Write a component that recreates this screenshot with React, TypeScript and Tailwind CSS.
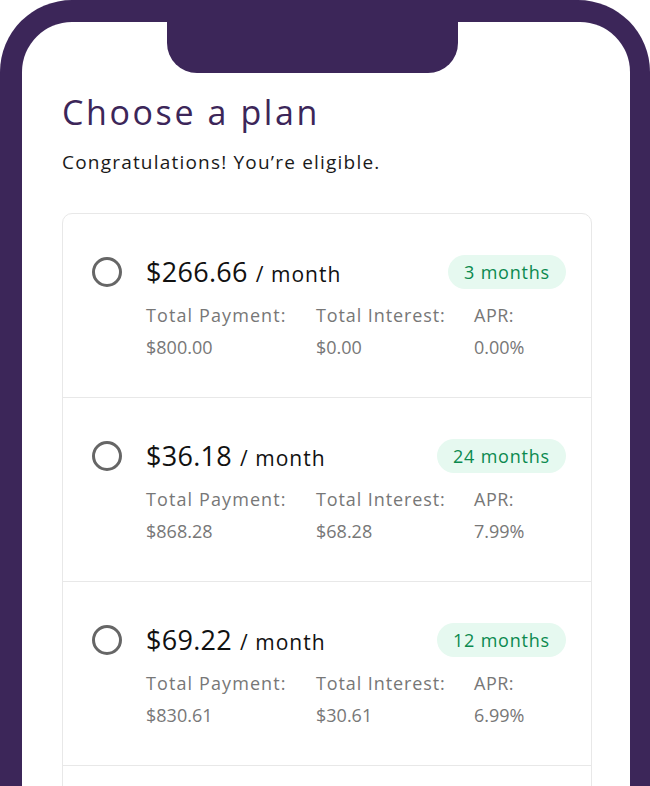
import React from "react";

const plans = [
  { monthly: "$266.66", term: "3 months", total: "$800.00", interest: "$0.00", apr: "0.00%" },
  { monthly: "$36.18", term: "24 months", total: "$868.28", interest: "$68.28", apr: "7.99%" },
  { monthly: "$69.22", term: "12 months", total: "$830.61", interest: "$30.61", apr: "6.99%" },
];

const PlanRow = ({ plan }: { plan: (typeof plans)[number] }) => (
  <div className="flex h-[184px] border-b border-[#e8e8e8] pl-[29px] pr-[25px] pt-[40px]">
    <div className="flex h-[36px] w-[30px] shrink-0 items-center">
      <span className="block h-[30px] w-[30px] rounded-full border-[3px] border-[#666666]" />
    </div>
    <div className="ml-[24px] flex-1">
      <div className="flex h-[36px] items-center justify-between">
        <div className="flex items-baseline text-[#111111]">
          <span className="text-[27px] tracking-[0.3px]">{plan.monthly}</span>
          <span className="ml-[8px] text-[21px] tracking-[1px]">/ month</span>
        </div>
        <span className="flex h-[34px] items-center rounded-full bg-[#e6f9f0] px-[16px] text-[18px] tracking-[0.8px] text-[#0b8a4f]">
          {plan.term}
        </span>
      </div>
      <div className="mt-[9px] grid grid-cols-[170px_158px_1fr] text-[18px] leading-[32px] text-[#777777]">
        <span className="tracking-[1.1px]">Total Payment:</span>
        <span className="tracking-[0.9px]">Total Interest:</span>
        <span className="tracking-[0.5px]">APR:</span>
        <span>{plan.total}</span>
        <span>{plan.interest}</span>
        <span>{plan.apr}</span>
      </div>
    </div>
  </div>
);

const App = () => {
  return (
    <div
      className="h-[786px] w-[650px] overflow-hidden bg-white"
      style={{ fontFamily: '"Open Sans", "Noto Sans", sans-serif' }}
    >
      <div className="h-[1000px] rounded-t-[72px] bg-[#3c2659] pl-[22px] pr-[20px] pt-[22px]">
        <div className="relative h-full rounded-t-[50px] bg-white pl-[40px] pr-[38px] pt-[70px]">
          {/* notch */}
          <div className="absolute left-[145px] top-0 h-[51px] w-[291px] rounded-b-[30px] bg-[#3c2659]" />
          <h1 className="text-[34px] leading-[40px] tracking-[2.6px] text-[#3c2659]">Choose a plan</h1>
          <p className="mt-[18px] text-[19px] leading-[24px] tracking-[1.2px] text-[#1a1a1a]">
            Congratulations! You’re eligible.
          </p>
          <div className="mt-[39px] rounded-[10px] border border-[#e8e8e8]">
            {plans.map((plan) => (
              <PlanRow plan={plan} key={plan.term} />
            ))}
            {/* next plan starts below the fold */}
            <div className="h-[184px]" />
          </div>
        </div>
      </div>
    </div>
  );
};

export default App;
